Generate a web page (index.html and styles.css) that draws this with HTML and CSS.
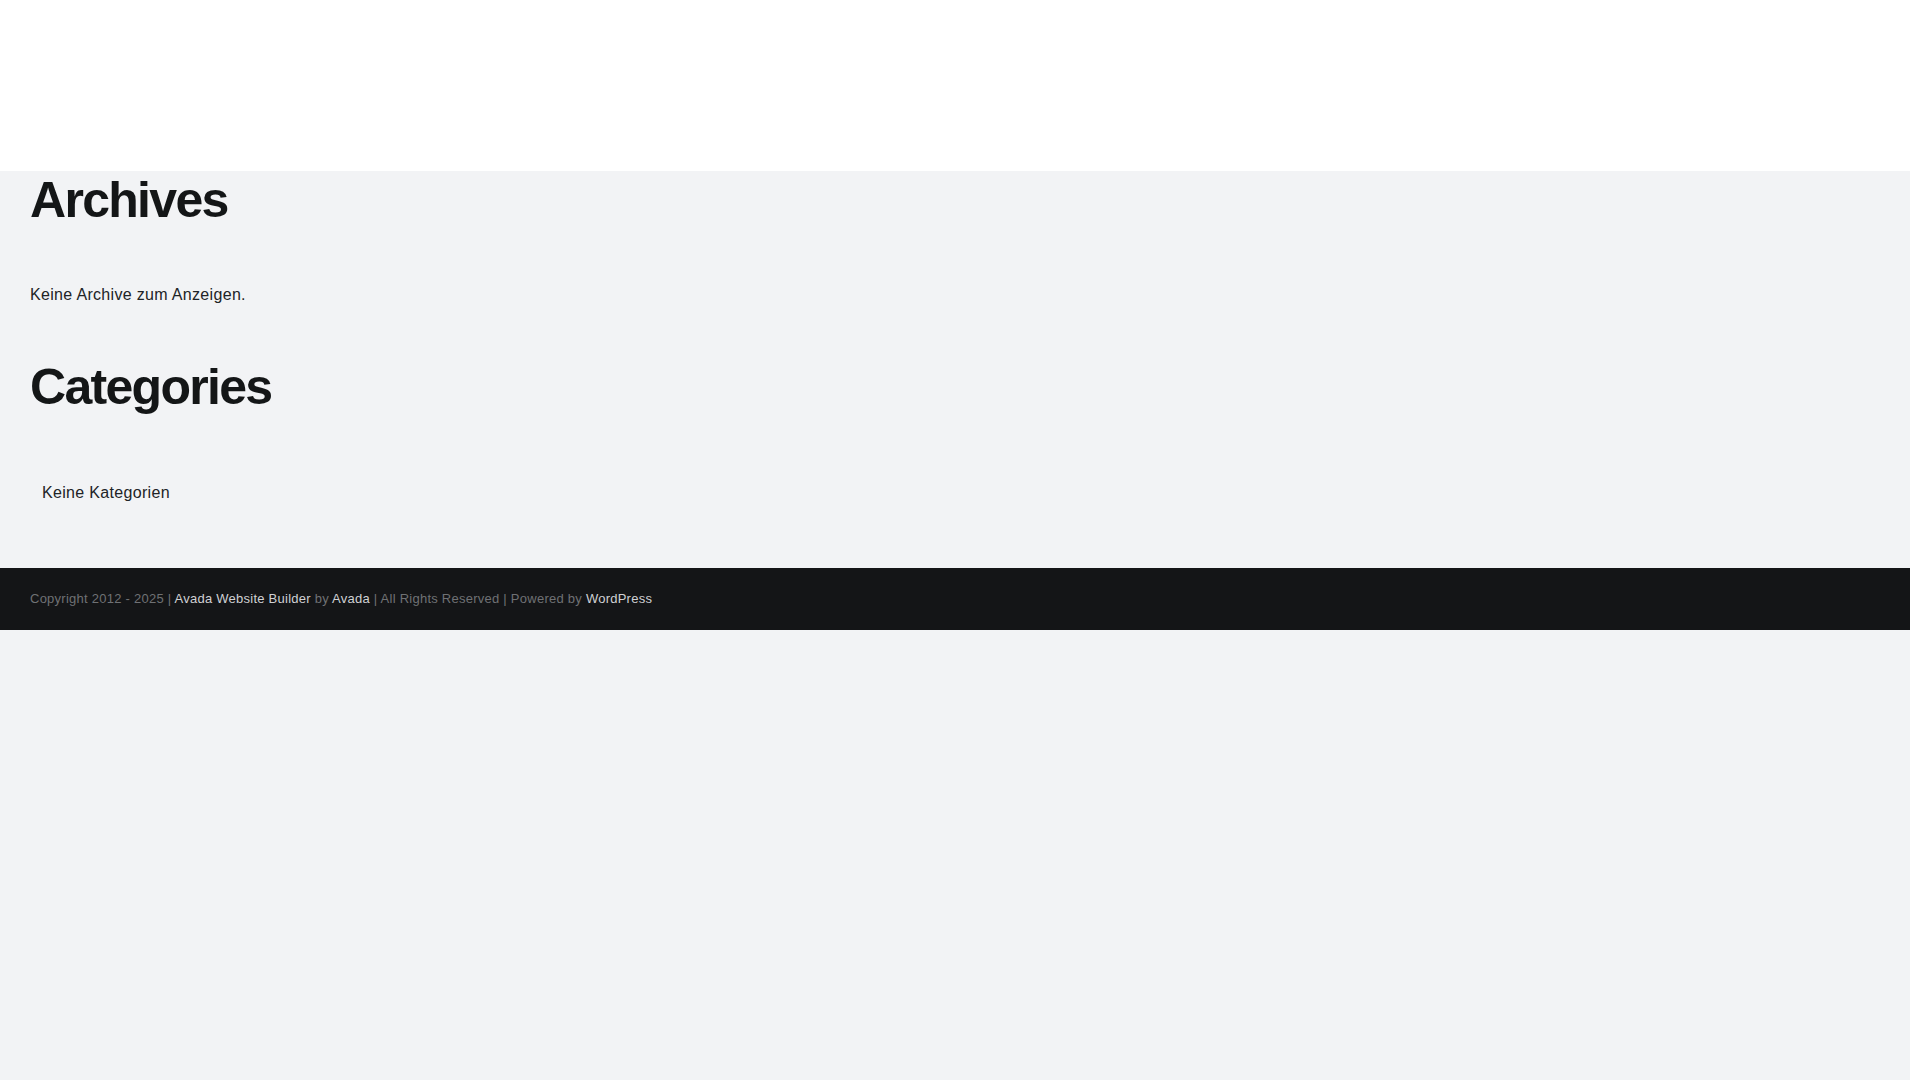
FILE: index.html
```html
<!DOCTYPE html>
<html lang="de">
<head>
<meta charset="utf-8">
<title>Archives</title>
<link rel="stylesheet" href="styles.css">
</head>
<body>
<header class="site-header"></header>
<main class="main">
  <section class="widget widget-archives">
    <h2 class="widget-title">Archives</h2>
    <p class="widget-empty">Keine Archive zum Anzeigen.</p>
  </section>
  <section class="widget widget-categories">
    <h2 class="widget-title">Categories</h2>
    <ul class="cat-list">
      <li class="cat-item">Keine Kategorien</li>
    </ul>
  </section>
</main>
<footer class="site-footer">
  <p class="copyright">Copyright 2012 - 2025 | <a href="#">Avada Website Builder</a> by <a href="#">Avada</a> | All Rights Reserved | Powered by <a href="#">WordPress</a></p>
</footer>
</body>
</html>
```
FILE: styles.css
```css
html {
  background: #ffffff;
}
body {
  margin: 0 10px 0 0;
  min-height: 100vh;
  background: #f2f3f5;
  font-family: "Liberation Sans", Arial, sans-serif;
  color: #212326;
  letter-spacing: 0.02em;
}
.site-header {
  height: 171px;
  background: #ffffff;
}
.main {
  padding: 2px 30px 0;
}
.widget-title {
  margin: 0;
  font-size: 50px;
  line-height: 55px;
  font-weight: 700;
  letter-spacing: -1.7px;
  color: #141617;
}
.widget-empty {
  margin: 53px 0 0;
  font-size: 16px;
  line-height: 27.2px;
}
.widget-categories {
  margin-top: 52px;
}
.cat-list {
  list-style: none;
  margin: 64px 0 0;
  padding: 0 0 0 12px;
  font-size: 16px;
  line-height: 27.2px;
}
.site-footer {
  margin-top: 62px;
  background: #141517;
  padding: 21px 30px;
}
.copyright {
  margin: 0;
  font-size: 13px;
  line-height: 20px;
  letter-spacing: 0.25px;
  color: #6f7174;
}
.copyright a {
  color: #d0d1d4;
  text-decoration: none;
}
```
